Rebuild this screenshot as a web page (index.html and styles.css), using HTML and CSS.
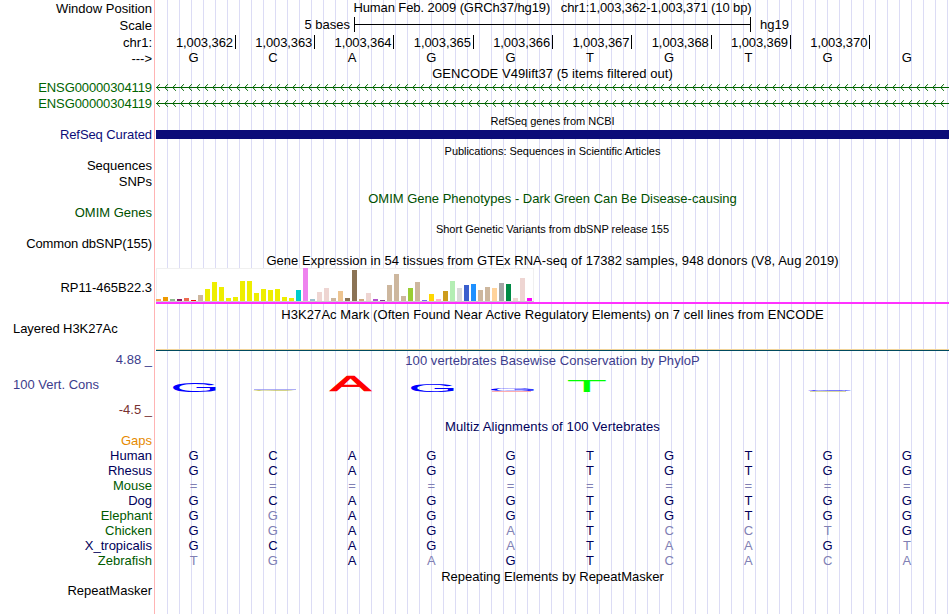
FILE: index.html
```html
<!DOCTYPE html>
<html lang="en">
<head>
<meta charset="utf-8">
<title>Genome Browser chr1:1,003,362-1,003,371</title>
<link rel="stylesheet" href="styles.css">
</head>
<body>
<main class="browser">
  <header>
    <div class="row h17"><div class="label">Window Position</div><div class="title up"><span class="t-pos">Human Feb. 2009 (GRCh37/hg19) &nbsp; chr1:1,003,362-1,003,371 (10 bp)</span></div></div>
    <div class="row h17"><div class="label">Scale</div><div class="scale"><span class="scale-left">5 bases</span><span class="scale-bar"></span><span>hg19</span></div></div>
    <div class="row h17"><div class="label">chr1:</div><div class="ruler"><span>1,003,362</span><span>1,003,363</span><span>1,003,364</span><span>1,003,365</span><span>1,003,366</span><span>1,003,367</span><span>1,003,368</span><span>1,003,369</span><span>1,003,370</span></div></div>
    <div class="row h15"><div class="label">---&gt;</div><div class="bases black" data-seq="GCAGGTGTGG"></div></div>
  </header>

  <section class="tracks">
    <div class="row h14"><div></div><div class="title"><span class="t-gencode">GENCODE V49lift37 (5 items filtered out)</span></div></div>
    <div class="row h16"><div class="label gene">ENSG00000304119</div><svg class="arrows" width="793" height="16"><defs><pattern id="chev" width="8" height="16" patternUnits="userSpaceOnUse"><path d="M0 7.5H8M3.8 4.2L.8 7.5L3.8 10.8"/></pattern></defs><rect width="793" height="16" fill="url(#chev)"/></svg></div>
    <div class="row h16"><div class="label gene">ENSG00000304119</div><svg class="arrows" width="793" height="16"><rect width="793" height="16" fill="url(#chev)"/></svg></div>

    <div class="row h15"><div></div><div class="title small low"><span>RefSeq genes from NCBI</span></div></div>
    <div class="row h16"><div class="label refseq">RefSeq Curated</div><div class="solid"></div></div>

    <div class="row h16"><div></div><div class="title small"><span class="t-pub">Publications: Sequences in Scientific Articles</span></div></div>
    <div class="row h15"><div class="label">Sequences</div></div>
    <div class="row h16"><div class="label">SNPs</div></div>

    <div class="row h16"><div></div><div class="title omim"><span>OMIM Gene Phenotypes - Dark Green Can Be Disease-causing</span></div></div>
    <div class="row h15"><div class="label omim">OMIM Genes</div></div>

    <div class="row h16"><div></div><div class="title small"><span>Short Genetic Variants from dbSNP release 155</span></div></div>
    <div class="row h15"><div class="label t-common">Common dbSNP(155)</div></div>

    <div class="row h16"><div></div><div class="title"><span class="t-gtex">Gene Expression in 54 tissues from GTEx RNA-seq of 17382 samples, 948 donors (V8, Aug 2019)</span></div></div>
    <div class="row h38"><div class="label mid">RP11-465B22.3</div><div class="gtex"><div class="bars" id="bars"></div></div></div>

    <div class="row h16"><div></div><div class="title"><span class="t-h3k">H3K27Ac Mark (Often Found Near Active Regulatory Elements) on 7 cell lines from ENCODE</span></div></div>
    <div class="row h29"><div class="label wide">Layered H3K27Ac</div><div class="signal"></div></div>

    <div class="row h68">
      <div class="cons"><div class="max">4.88 _</div><div class="name">100 Vert. Cons</div><div class="min">-4.5 _</div></div>
      <div class="phylo">
        <div class="title phylop"><span class="t-phylo">100 vertebrates Basewise Conservation by PhyloP</span></div>
        <svg class="logo" width="793" height="32" viewBox="156 368 793 32">
          <g font-size="100">
            <text fill="#00f" transform="translate(169.7 391.5) scale(.65 .13)">G</text>
            <text fill="#b5b52a" transform="translate(250.2 390.7) scale(.65 .022)">C</text>
            <rect x="254" y="389" width="42" height="1" fill="#8c8cf0" opacity=".7"/>
            <text fill="#f00" stroke="#f00" stroke-width="3" transform="translate(330.2 391) scale(.61 .225)">A</text>
            <text fill="#00f" transform="translate(407.7 391.8) scale(.65 .103)">G</text>
            <text fill="#00f" transform="translate(487.7 390.7) scale(.65 .035)">G</text>
            <rect x="492" y="391" width="39" height="1" fill="#ff9a9a" opacity=".8"/>
            <text fill="#0f0" transform="translate(566.6 392) scale(.667 .16)">T</text>
            <text fill="#00f" transform="translate(804.7 391.2) scale(.65 .024)">G</text>
            <rect x="810" y="391" width="36" height="1" fill="#c8c878" opacity=".7"/>
          </g>
        </svg>
      </div>
    </div>

    <div class="row h15"><div></div><div class="title multiz"><span class="t-multiz">Multiz Alignments of 100 Vertebrates</span></div></div>
    <div class="row h15"><div class="label gaps">Gaps</div></div>
    <div class="row h15"><div class="label blue">Human</div><div class="bases" data-seq="GCAGGTGTGG"></div></div>
    <div class="row h15"><div class="label blue">Rhesus</div><div class="bases" data-seq="GCAGGTGTGG"></div></div>
    <div class="row h15"><div class="label green">Mouse</div><div class="bases" data-seq="=========="></div></div>
    <div class="row h15"><div class="label blue">Dog</div><div class="bases" data-seq="GCAGGTGTGG"></div></div>
    <div class="row h15"><div class="label green">Elephant</div><div class="bases" data-seq="GGAGGTGTGG"></div></div>
    <div class="row h15"><div class="label green">Chicken</div><div class="bases" data-seq="GGAGATCCTG"></div></div>
    <div class="row h15"><div class="label blue">X_tropicalis</div><div class="bases" data-seq="GCAGATAAGT"></div></div>
    <div class="row h15"><div class="label green">Zebrafish</div><div class="bases" data-seq="TGAAGTCACA"></div></div>

    <div class="row h15"><div></div><div class="title"><span>Repeating Elements by RepeatMasker</span></div></div>
    <div class="row h15"><div class="label">RepeatMasker</div></div>
  </section>
</main>
<script src="tracks.js"></script>
</body>
</html>
```
FILE: styles.css
```css
* { box-sizing: border-box; }
body { margin: 0; background: #fff; overflow: hidden; }
.browser {
  width: 949px; height: 614px;
  font: 13px/15px "Liberation Sans", Arial, sans-serif;
  color: #000; white-space: nowrap;
  background:
    linear-gradient(#ffb4b4, #ffb4b4) 154px 0 / 1px 100% no-repeat,
    repeating-linear-gradient(90deg, #dcdcf5 0 1px, transparent 1px 12px) 167px 0 / 782px 100% no-repeat;
}
.row { display: grid; grid-template-columns: 152px 793px; column-gap: 4px; align-items: center; }
.h14 { height: 14px; } .h15 { height: 15px; } .h16 { height: 16px; } .h17 { height: 17px; }
.h29 { height: 29px; } .h38 { height: 38px; } .h68 { height: 68px; }
.row > * { min-width: 0; }
.label { text-align: right; }
.tracks .label { margin-top: -1px; margin-bottom: 1px; }
.tracks .label.mid { margin: 0; }
.title { text-align: center; }
.up { padding-bottom: 2px; }
.low { padding-top: 2px; }
.small { font-size: 11px; }

.t-pos { letter-spacing: -.09px; }
.t-gencode, .t-h3k, .t-gtex { letter-spacing: .055px; }
.t-phylo { letter-spacing: .05px; }
.t-multiz { letter-spacing: .11px; }
.t-pub { letter-spacing: -.04px; }
.t-common { letter-spacing: -.12px; }

.gene { color: #006400; letter-spacing: -.11px; }
.refseq { color: #0c0c78; letter-spacing: -.08px; }
.omim { color: #005000; }
.phylop, .max, .name { color: #3c3c8c; }
.multiz, .blue { color: #00005a; }
.green { color: #005a00; }
.gaps { color: #e68a00; }

.scale { display: flex; height: 17px; align-items: center; }
.scale-left { width: 194px; text-align: right; margin-right: 4px; }
.scale-bar {
  width: 397px; height: 15px; margin: 0 9px 2px 0;
  border: solid #000; border-width: 0 1px;
  background: linear-gradient(#000, #000) 0 7px / 100% 1px no-repeat;
}
.scale span:not(.scale-bar) { padding-bottom: 2px; }
.ruler { display: grid; grid-template-columns: repeat(9, 79.3px); padding-left: .6px; height: 17px; align-items: start; }
.ruler span { text-align: right; border-right: 1px solid #000; height: 14px; margin-top: 1px; padding-right: 2px; line-height: 15px; letter-spacing: -.1px; }
.bases { display: grid; grid-template-columns: repeat(10, 79.25px); margin: -1px 0 1px -2px; text-align: center; color: #00005a; }
.bases.black { color: #000; }
.bases .diff { color: #8080b4; }
.arrows { display: block; }
#chev path { fill: none; stroke: #006400; stroke-width: 1; }
.solid { height: 9px; margin: -1px 0 1px; background: #0c0c78; }
.gtex { align-self: start; height: 36px; border-bottom: 2px solid #ff32ff; }
.bars {
  display: flex; align-items: flex-end; gap: 2px; width: 378px; height: 34px;
  background: #fff; border-bottom: 1px solid #ccc; box-shadow: inset -1px 1px #f0f0f0, inset 1px 0 #f0f0f0;
}
.bars i { width: 5px; flex: none; }
.wide { align-self: start; text-align: left; padding-left: 13px; letter-spacing: -.06px; }
.signal { align-self: end; height: 2px; background: #004b5f; border-top: 1px solid #f0d296; }
.cons, .phylo { align-self: start; height: 68px; }
.cons { display: grid; grid-template-rows: 17px 32px 19px; text-align: right; padding-top: 1px; }
.name { text-align: left; padding: 8px 0 0 13px; }
.min { color: #783232; padding-top: 1px; }
.phylo .title { margin-top: 2px; }
.logo { display: block; overflow: visible; }
```
FILE: tracks.js
```js
// Median expression per tissue: [bar height, colour]
const Y = '#eeee00', T = '#cdb79e', P = '#eed5d2';
const tissues = [
  [2, '#ffa54f'], [4, '#ee9a00'], [2, '#8fbc8f'], [2, '#8b1c62'], [3, '#ee6a50'], [1, '#ff0000'], [6, T],
  [12, Y], [19, Y], [14, Y], [3, Y], [4, Y], [20, Y], [20, Y], [8, Y], [12, Y], [11, Y], [12, Y], [4, Y], [3, Y],
  [11, '#00cdcd'], [33, '#ee82ee'], [2, '#9ac0cd'], [9, P], [13, P], [3, T], [10, '#eec591'], [3, '#8b7355'],
  [31, '#8b7355'], [2, '#cdaa7d'], [8, P], [2, '#b452cd'], [1, '#7a378b'], [16, T], [27, T], [5, T],
  [13, '#9acd32'], [19, T], [1, '#7a67ee'], [7, '#ffd700'], [2, '#ffb6c1'], [10, '#cd9b1d'], [20, '#b4eeb4'],
  [13, '#d9d9d9'], [16, '#3a5fcd'], [17, '#1e90ff'], [11, T], [14, T], [13, '#ffd39b'], [18, '#a6a6a6'],
  [17, '#008b45'], [3, P], [23, P], [3, '#ff00ff']
];
document.getElementById('bars').innerHTML =
  tissues.map(([h, c]) => `<i style="height:${h}px;background:${c}"></i>`).join('');

// Bases that differ from the human sequence are dimmed
const human = 'GCAGGTGTGG';
document.querySelectorAll('.bases').forEach(el => {
  el.innerHTML = [...el.dataset.seq].map((b, i) => `<span class="${b === human[i] ? '' : 'diff'}">${b}</span>`).join('');
});
```
